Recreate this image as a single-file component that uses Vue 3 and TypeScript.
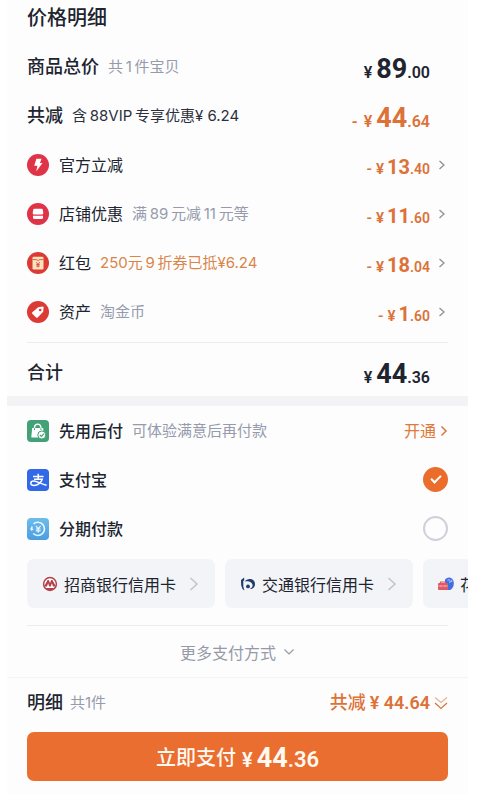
<script setup lang="ts">
import { ref } from 'vue'

interface Discount {
  icon: 'bolt' | 'shop' | 'packet' | 'tag'
  label: string
  note: string
  hot?: boolean
  whole: string
  cents: string
}

const discounts: Discount[] = [
  { icon: 'bolt', label: '官方立减', note: '', whole: '13', cents: '.40' },
  { icon: 'shop', label: '店铺优惠', note: '满\u200989\u2009元减\u200911\u2009元等', whole: '11', cents: '.60' },
  { icon: 'packet', label: '红包', note: '250元\u20099\u2009折券已抵¥6.24', hot: true, whole: '18', cents: '.04' },
  { icon: 'tag', label: '资产', note: '淘金币', whole: '1', cents: '.60' },
]

const method = ref('alipay')
</script>

<template>
  <main class="sheet">
    <section class="block">
      <h1 class="title">价格明细</h1>

      <div class="row">
        <h2 class="head">商品总价</h2>
        <span class="note">共&#8201;1&#8201;件宝贝</span>
        <span class="price big"><span class="yen">¥</span><b>89</b><span class="cents">.00</span></span>
      </div>
      <div class="row">
        <h2 class="head">共减</h2>
        <span class="note dark">含&#8201;88VIP&#8201;专享优惠¥ 6.24</span>
        <span class="price big orange"><span class="minus">-</span><span class="yen">¥</span><b>44</b><span class="cents">.64</span></span>
      </div>

      <div v-for="d in discounts" :key="d.label" class="row">
        <svg class="icon" viewBox="0 0 22 22" aria-hidden="true">
          <template v-if="d.icon === 'bolt'">
            <circle cx="11" cy="11" r="11" fill="#df3347" />
            <path d="M9.4 4.8h5.2l-1.7 4.1h2.6l-6.3 8.6 1.2-5.7H7.2z" fill="#fff" />
          </template>
          <template v-else-if="d.icon === 'shop'">
            <circle cx="11" cy="11" r="11" fill="#df3347" />
            <path d="M7.4 5.7h7.2q1 0 1.2 1l.5 3.2q.1 1.5-1.4 1.5H7.100q-1.500 0-1.400-1.500l.5-3.200q.2-1 1.200-1z" fill="#fff" />
            <path d="M6 12.700h10v1.700q0 1.500-1.500 1.500h-7q-1.500 0-1.500-1.500z" fill="#fff" />
          </template>
          <template v-else-if="d.icon === 'packet'">
            <circle cx="11" cy="11" r="11" fill="#dc3a35" />
            <rect x="5.500" y="4.800" width="11" height="12.700" rx="1.200" fill="#fce3bd" />
            <path d="M5.500 7.600h3.500l2 .8 2-.8h3.500" fill="none" stroke="#d9513c" stroke-width=".9" />
            <path d="m9.200 10.200 1.800 2.200 1.800-2.200M11 12.400v3M9.300 12.600h3.400M9.300 14.100h3.400" fill="none" stroke="#cf4634" stroke-width=".9" />
          </template>
          <template v-else>
            <circle cx="11" cy="11" r="11" fill="#dc3a35" />
            <path d="M11.200 6.300 15.400 5.500q1.200-.1 1.200 1l-.4 4.300-5.500 5.700q-.8.7-1.600 0l-3.800-3.700q-.8-.8 0-1.600z" fill="#fff" />
            <circle cx="13.200" cy="9" r="1.300" fill="#dc3a35" />
          </template>
        </svg>
        <span class="label">{{ d.label }}</span>
        <span v-if="d.note" class="note" :class="{ hot: d.hot }">{{ d.note }}</span>
        <span class="price orange"><span class="minus">-</span><span class="yen">¥</span><b>{{ d.whole }}</b><span class="cents">{{ d.cents }}</span></span>
        <svg class="arrow" viewBox="0 0 8 12" aria-hidden="true"><path d="m1.500 2 4.500 4-4.500 4" fill="none" stroke="#8e9097" stroke-width="1.300" /></svg>
      </div>

      <div class="row total">
        <h2 class="head">合计</h2>
        <span class="price big"><span class="yen">¥</span><b>44</b><span class="cents">.36</span></span>
      </div>
    </section>

    <section class="block pay">
      <div class="row">
        <svg class="icon" viewBox="0 0 22 22" aria-hidden="true">
          <rect width="22" height="22" rx="4" fill="#43a177" />
          <path d="M5.200 8h11l.6 8.800q0 .8-.9.800H5.200q-1 0-.9-.9z" fill="#fff" />
          <path d="M7.500 10V7.300q.3-3.100 3.200-3.100t3.200 3.100V10" fill="none" stroke="#fff" stroke-width="1.300" />
          <path d="M7.500 8.200v1.900M13.900 8.200v1.900" stroke="#43a177" stroke-width="1" />
          <circle cx="14.800" cy="15" r="4" fill="#fff" stroke="#43a177" />
          <path d="m12.900 15 1.500 1.500 2.600-2.800" fill="none" stroke="#43a177" stroke-width="1.200" />
        </svg>
        <span class="label strong">先用后付</span>
        <span class="note">可体验满意后再付款</span>
        <a class="open" href="#">开通<svg viewBox="0 0 8 12" aria-hidden="true"><path d="m1.500 1.500 4.500 4.500-4.500 4.500" fill="none" stroke="currentColor" stroke-width="1.500" /></svg></a>
      </div>
      <label class="row">
        <svg class="icon" viewBox="0 0 22 22" aria-hidden="true">
          <rect width="22" height="22" rx="4" fill="#3169e7" />
          <path d="M6 7.500h10.600M11.200 4.800v5.200M7 10.300h8.200c-1 3.500-4.500 6.200-8.200 6.200-2 0-3.200-.8-3.200-2.200s1.300-2.200 3-2.200c3.200 0 7 2.700 12.800 4.200" fill="none" stroke="#fff" stroke-width="1.500" />
        </svg>
        <span class="label strong">支付宝</span>
        <input v-model="method" class="radio" type="radio" name="method" value="alipay" />
      </label>
      <label class="row">
        <svg class="icon" viewBox="0 0 22 22" aria-hidden="true">
          <defs><linearGradient id="sky" x2="0" y2="1"><stop stop-color="#6dbdea" /><stop offset="1" stop-color="#4b9de0" /></linearGradient></defs>
          <rect width="22" height="22" rx="4" fill="url(#sky)" />
          <path d="M6.500 5.900a6.600 6.600 0 1 1-.3 9.600M4.600 11.500a6.600 6.600 0 0 1 .6-3" fill="none" stroke="#e9f7ff" stroke-width="1.600" />
          <path d="m3 10.300 1.600 2.600 2.200-2z" fill="#e9f7ff" />
          <path d="m8.800 7.800 2.400 2.900 2.400-2.900M11.200 10.700v4M8.800 11h4.800M8.800 12.900h4.800" fill="none" stroke="#e9f7ff" stroke-width="1.100" />
        </svg>
        <span class="label strong">分期付款</span>
        <input v-model="method" class="radio" type="radio" name="method" value="installment" />
      </label>

      <div class="cards">
        <button class="card" type="button">
          <svg class="bank" viewBox="0 0 16 16" aria-hidden="true">
            <circle cx="8" cy="8" r="6.400" fill="#fff" stroke="#b4404b" stroke-width="1.500" />
            <path d="M2 10.500 5.600 4h1.200L8 7l1.200-3h1.200l3.600 6.500H11L9.900 7.200 8.800 10.500H7.200L6.100 7.200 5 10.500z" fill="#b4404b" />
            <path d="M3.500 12h9l-2 2h-5z" fill="#b4404b" />
          </svg>
          <span>招商银行信用卡</span>
          <svg class="next" viewBox="0 0 10 16" aria-hidden="true"><path d="m1.500 2 6.500 6-6.500 6" fill="none" stroke="#c3c5ca" stroke-width="1.600" /></svg>
        </button>
        <button class="card" type="button">
          <svg class="bank" viewBox="0 0 16 16" aria-hidden="true">
            <path d="M1 4 4.200 1.400v2.800l-.9.800v5.500l1.200 4Q1.800 13 1.200 9.500z" fill="#1f3c6c" />
            <path d="M4.600 5.600C7 2 15 1.800 15 8.200c0 3.200-2.600 5.200-5.400 4.800 2-.8 3.200-2 3-3.900-.4-3.200-4.800-4.600-8-3.500z" fill="#1f3c6c" />
            <circle cx="8" cy="10.400" r="1.900" fill="#1f3c6c" />
          </svg>
          <span>交通银行信用卡</span>
          <svg class="next" viewBox="0 0 10 16" aria-hidden="true"><path d="m1.500 2 6.500 6-6.500 6" fill="none" stroke="#c3c5ca" stroke-width="1.600" /></svg>
        </button>
        <button class="card" type="button">
          <svg class="bank" viewBox="0 0 16 16" aria-hidden="true">
            <path d="M7 3.400q3-2.700 5.500-1.600 3.500 1.600 3.300 6T12 14H7z" fill="#3f6fe3" />
            <path d="M9.500 4.200q2-1.200 2.600.4t-.8 2.400" fill="none" stroke="#dfe9ff" stroke-width=".8" />
            <circle cx="13.600" cy="5" r=".8" fill="#dfe9ff" />
            <path d="M2.500 7.500V6h5v1.500" fill="none" stroke="#d95562" stroke-width="1.200" />
            <rect x="0" y="7" width="10" height="7" rx="1" fill="#dc5a66" />
            <path d="M0 10h10M3 9v2.200M7 9v2.200" stroke="#f4b3b8" stroke-width=".8" />
          </svg>
          <span>花呗</span>
        </button>
      </div>

      <button class="more" type="button">更多支付方式<svg viewBox="0 0 12 8" aria-hidden="true"><path d="m1.500 1.500 4.500 4.500 4.500-4.500" fill="none" stroke="currentColor" stroke-width="1.200" /></svg></button>
    </section>

    <footer class="block foot">
      <div class="row">
        <h2 class="head">明细</h2>
        <span class="note tight">共1件</span>
        <span class="saved">共减<span class="num">¥ 44.64</span><svg viewBox="0 0 14 14" aria-hidden="true" fill="none" stroke="currentColor" stroke-width="1.200"><path d="m1 1.500 6 5 6-5" opacity=".55" /><path d="m1 7 6 5.500 6-5.500" /></svg></span>
      </div>
      <button class="submit" type="button">立即支付<span class="price big"><span class="yen">¥</span><b>44</b><span class="cents">.36</span></span></button>
    </footer>
  </main>
</template>

<style>
body {
  margin: 0;
  background: #fff;
}
</style>

<style scoped>
.sheet {
  margin: 0 32px 0 7px;
  background: #fdfdfe;
  color: #20242f;
  font-family: Inter, "Noto Sans CJK SC", sans-serif;
  font-size: 16px;
  overflow: hidden;
}
.block {
  padding: 0 20px;
}
h1,
h2 {
  margin: 0;
}
.title {
  padding-bottom: 6px;
  font-size: 20px;
  font-weight: 500;
  line-height: 36px;
}
.row {
  display: flex;
  align-items: center;
  height: 49px;
  line-height: 24px;
  white-space: nowrap;
}
.head {
  margin-right: 9px;
  font-size: 18px;
  font-weight: 500;
}
.icon {
  flex: none;
  width: 22px;
  height: 22px;
  margin-right: 10px;
}
.label {
  margin-right: 9px;
}
.strong {
  font-weight: 500;
}
.note {
  color: #969bab;
  font-size: 15px;
}
.note.dark {
  color: #2c303b;
}
.note.hot {
  color: #d98548;
}
.price {
  display: flex;
  align-items: baseline;
  margin-left: auto;
  padding-top: 6px;
  margin-right: 18px;
  font-family: Roboto, sans-serif;
  font-size: 15px;
  font-weight: 600;
}
.price b {
  font-size: 20px;
  font-weight: 700;
}
.yen {
  margin-right: 3px;
}
.minus {
  margin-right: 4px;
}
.price .cents {
  font-size: 14px;
}
.price.big {
  padding-top: 8px;
  font-size: 16px;
}
.price.big .cents {
  font-size: 16px;
}
.price.big b {
  font-size: 27px;
}
.price.big .yen {
  margin-right: 4px;
}
.price.big .minus {
  margin-right: 6px;
}
.orange {
  color: #dc7238;
}
.arrow {
  flex: none;
  width: 8px;
  height: 12px;
  margin-left: -10px;
  margin-right: 2px;
}
.total {
  height: 53px;
  margin-top: 6px;
  border-top: 1px solid #ececef;
}
.total .head {
  padding-top: 6px;
}
.total .price.big {
  padding-top: 12px;
}
.pay {
  border-top: 10px solid #f3f3f5;
}
.open {
  display: flex;
  align-items: center;
  gap: 4px;
  margin-left: auto;
  color: #df7839;
  text-decoration: none;
}
.open svg {
  width: 8px;
  height: 12px;
}
.radio {
  appearance: none;
  display: grid;
  place-items: center;
  box-sizing: border-box;
  width: 25px;
  height: 25px;
  margin: 0 0 0 auto;
  border: 2px solid #cfd0da;
  border-radius: 50%;
}
.radio:checked {
  border-color: #eb6d2c;
  background: #eb6d2c;
}
.radio:checked::after {
  content: "";
  width: 8px;
  height: 4px;
  margin-bottom: 3px;
  border: solid #fff;
  border-width: 0 0 2px 2px;
  transform: rotate(-45deg);
}
.cards {
  display: flex;
  gap: 10px;
  margin: 6px -20px 17px 0;
  overflow: hidden;
}
button {
  border: 0;
  font: inherit;
  color: inherit;
}
.card {
  display: flex;
  flex: none;
  align-items: center;
  height: 49px;
  padding: 0 16px 0 15px;
  border-radius: 7px;
  background: #f3f4f7;
}
.bank {
  width: 16px;
  height: 16px;
  margin-right: 6px;
}
.next {
  width: 10px;
  height: 16px;
  margin-left: 13px;
}
.more {
  display: flex;
  align-items: center;
  justify-content: center;
  gap: 7px;
  width: 100%;
  height: 52px;
  padding: 0;
  border-top: 1px solid #ececef;
  background: none;
  color: #959aa6;
}
.more svg {
  width: 12px;
  height: 8px;
}
.foot {
  padding-bottom: 13px;
  border-top: 1px solid #f4f4f6;
}
.tight {
  margin-left: -2px;
}
.saved {
  display: flex;
  align-items: center;
  gap: 4px;
  margin-left: auto;
  color: #dc7238;
  font-size: 18px;
  font-weight: 500;
}
.num {
  font-family: Roboto, sans-serif;
  font-weight: 600;
}
.saved svg {
  width: 14px;
  height: 14px;
}
.submit {
  display: flex;
  align-items: center;
  justify-content: center;
  width: 100%;
  height: 49px;
  margin-top: 5px;
  padding: 0;
  border-radius: 7px;
  background: #ea6e2f;
  color: #fff9f1;
  font-size: 20px;
  font-weight: 500;
}
.submit .price.big {
  margin: 0 0 0 6px;
  padding-top: 2px;
  font-size: 20px;
}
.submit .price.big .cents {
  font-size: 22px;
}
</style>
